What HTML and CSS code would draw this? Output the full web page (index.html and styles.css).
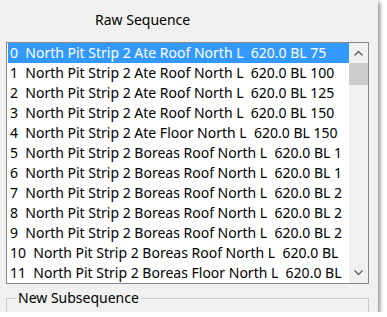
FILE: index.html
```html
<!DOCTYPE html>
<html lang="en">
<head>
    <meta charset="UTF-8">
    <title>Raw Sequence</title>
    <link rel="stylesheet" href="styles.css">
</head>
<body>
    <div class="window">
        <div class="title">Raw Sequence</div>

        <div class="listbox">
            <div class="items">
                <div class="item selected">0  North Pit Strip 2 Ate Roof North L  620.0 BL 75</div>
                <div class="item">1  North Pit Strip 2 Ate Roof North L  620.0 BL 100</div>
                <div class="item">2  North Pit Strip 2 Ate Roof North L  620.0 BL 125</div>
                <div class="item">3  North Pit Strip 2 Ate Roof North L  620.0 BL 150</div>
                <div class="item">4  North Pit Strip 2 Ate Floor North L  620.0 BL 150</div>
                <div class="item">5  North Pit Strip 2 Boreas Roof North L  620.0 BL 1</div>
                <div class="item">6  North Pit Strip 2 Boreas Roof North L  620.0 BL 1</div>
                <div class="item">7  North Pit Strip 2 Boreas Roof North L  620.0 BL 2</div>
                <div class="item">8  North Pit Strip 2 Boreas Roof North L  620.0 BL 2</div>
                <div class="item">9  North Pit Strip 2 Boreas Roof North L  620.0 BL 2</div>
                <div class="item">10  North Pit Strip 2 Boreas Roof North L  620.0 BL</div>
                <div class="item">11  North Pit Strip 2 Boreas Floor North L  620.0 BL</div>
            </div>
            <div class="scrollbar">
                <div class="arrow">
                    <svg width="9" height="6" viewBox="0 0 9 6"><path d="M0.5 5.5 L4.5 1.5 L8.5 5.5" fill="none" stroke="#606060" stroke-width="1.4"/></svg>
                </div>
                <div class="thumb"></div>
                <div class="track"></div>
                <div class="arrow">
                    <svg width="9" height="6" viewBox="0 0 9 6"><path d="M0.5 0.5 L4.5 4.5 L8.5 0.5" fill="none" stroke="#606060" stroke-width="1.4"/></svg>
                </div>
            </div>
        </div>

        <div class="groupbox">
            <span class="legend">New Subsequence</span>
        </div>
    </div>
</body>
</html>
```

FILE: styles.css
```css
body {
    margin: 0;
    padding: 0;
    background-color: #ffffff;
    font-family: "Noto Sans", "Open Sans", sans-serif;
}
.window {
    width: 378px;
    height: 312px;
    background-color: #f0f0f0;
    box-shadow: 2px 2px 4px rgba(0, 0, 0, 0.45);
    overflow: hidden;
}
.title {
    height: 42px;
    line-height: 40px;
    padding-left: 95px;
    font-size: 14px;
    color: #000;
}
.listbox {
    display: flex;
    margin-left: 6px;
    width: 360px;
    height: 240px;
    border: 1px solid #828790;
    background: white;
    padding: 0 0 0 1px;
    overflow: hidden;
}
.items {
    flex: 1;
    overflow: hidden;
}
.item {
    height: 20px;
    line-height: 20px;
    padding-left: 2px;
    font-size: 14px;
    white-space: pre;
    overflow: hidden;
    color: #000;
}
.item.selected {
    background-color: #3399ff;
    color: white;
}
.scrollbar {
    width: 19px;
    display: flex;
    flex-direction: column;
    background-color: #f0f0f0;
}
.arrow {
    height: 20px;
    display: flex;
    align-items: center;
    justify-content: center;
}
.thumb {
    height: 22px;
    background-color: #cdcdcd;
}
.track {
    flex: 1;
}
.groupbox {
    margin: 14px 0 0 6px;
    width: 361px;
    height: 20px;
    border: 1px solid #c9c9c9;
    border-bottom: none;
    position: relative;
}
.legend {
    position: absolute;
    left: 9px;
    top: -11px;
    padding: 0 2px;
    background-color: #f0f0f0;
    font-size: 14px;
    line-height: 20px;
}
```
